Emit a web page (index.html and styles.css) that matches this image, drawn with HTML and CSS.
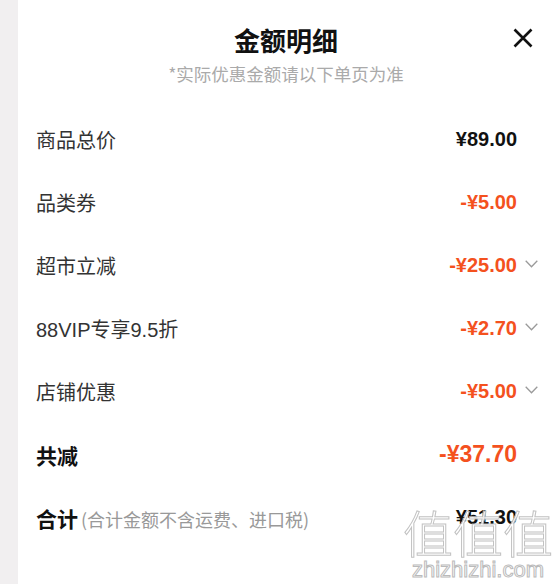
FILE: index.html
```html
<html>
<head>
  <meta charset="utf-8">
  <link rel="stylesheet" href="styles.css">
</head>
<body>
  <div id="app">
    <div class="side"></div>
    <div class="panel">
      <div class="header">
        <div class="title">金额明细</div>
        <div class="subtitle">*实际优惠金额请以下单页为准</div>
        <button class="close" aria-label="关闭">
          <svg width="20" height="20" viewBox="0 0 20 20"><path d="M1.5 1.5 L18.5 18.5 M18.5 1.5 L1.5 18.5" stroke="#111" stroke-width="2.6" fill="none"/></svg>
        </button>
      </div>
      <div class="rows">
        <div class="row">
          <span class="label">商品总价</span>
          <span class="amount">¥89.00</span>
          <span class="more"></span>
        </div>
        <div class="row">
          <span class="label">品类券</span>
          <span class="amount off">-¥5.00</span>
          <span class="more"></span>
        </div>
        <div class="row">
          <span class="label">超市立减</span>
          <span class="amount off">-¥25.00</span>
          <span class="more"><svg width="13" height="8" viewBox="0 0 13 8"><path d="M0.7 0.7 L6.5 6.7 L12.3 0.7" stroke="#9a9a9a" stroke-width="1.3" fill="none"/></svg></span>
        </div>
        <div class="row">
          <span class="label">88VIP专享9.5折</span>
          <span class="amount off">-¥2.70</span>
          <span class="more"><svg width="13" height="8" viewBox="0 0 13 8"><path d="M0.7 0.7 L6.5 6.7 L12.3 0.7" stroke="#9a9a9a" stroke-width="1.3" fill="none"/></svg></span>
        </div>
        <div class="row">
          <span class="label">店铺优惠</span>
          <span class="amount off">-¥5.00</span>
          <span class="more"><svg width="13" height="8" viewBox="0 0 13 8"><path d="M0.7 0.7 L6.5 6.7 L12.3 0.7" stroke="#9a9a9a" stroke-width="1.3" fill="none"/></svg></span>
        </div>
        <div class="row sum">
          <span class="label strong">共减</span>
          <span class="amount off big">-¥37.70</span>
          <span class="more"></span>
        </div>
        <div class="row sum">
          <span class="label strong">合计<small class="note">(合计金额不含运费、进口税)</small></span>
          <span class="amount">¥51.30</span>
          <span class="more"></span>
        </div>
      </div>
      <div class="watermark">
        <div class="wm-mark">值值值</div>
        <div class="wm-site">zhizhizhi.com</div>
      </div>
    </div>
  </div>
</body>
</html>
```

FILE: styles.css
```css
*, *:before, *:after { box-sizing: border-box; }
html, body { height: 100%; }
body {
  margin: 0;
  padding: 0;
  font-family: "Liberation Sans", "Noto Sans CJK SC", sans-serif;
  color: #333;
  background-color: #fff;
}
#app { display: flex; height: 100%; }
.side { flex: 0 0 18px; background-color: #f1eff0; }
.panel {
  flex: 1;
  position: relative;
  background-color: #fff;
  overflow: hidden;
}

/* header */
.header {
  position: relative;
  padding: 24px 0 24px;
  text-align: center;
}
.title {
  font-family: "Noto Sans CJK SC", sans-serif;
  font-size: 26px;
  line-height: 32px;
  font-weight: 700;
  color: #111;
}
.subtitle {
  margin-top: 8px;
  font-family: "Noto Sans CJK SC", sans-serif;
  font-size: 17.5px;
  line-height: 20px;
  color: #aaa;
}
.close {
  position: absolute;
  top: 28px;
  right: 21px;
  width: 20px;
  height: 20px;
  padding: 0;
  border: 0;
  background: none;
}
.close svg { display: block; }

/* rows */
.rows { padding: 0 16px 0 18px; }
.row {
  display: flex;
  align-items: center;
  height: 63px;
}
.label {
  flex: 1;
  font-size: 20px;
  color: #333;
}
.label.strong {
  font-family: "Noto Sans CJK SC", sans-serif;
  font-weight: 700;
  font-size: 21px;
  color: #111;
}
.note {
  margin-left: 3px;
  font-family: "Noto Sans CJK SC", sans-serif;
  font-weight: 400;
  font-size: 18px;
  color: #999;
}
.amount {
  font-size: 20px;
  font-weight: 700;
  color: #111;
}
.amount.off { color: #f4511e; }
.amount.big { font-size: 23px; }
.more {
  flex: 0 0 21px;
  display: flex;
  justify-content: flex-end;
  margin-top: -4px;
}
.more svg { display: block; }

/* watermark overlay */
.watermark {
  position: absolute;
  right: 1px;
  bottom: 2px;
  width: 150px;
  text-align: center;
  color: #fff;
  opacity: 0.92;
}
.wm-mark {
  font-family: "Noto Sans CJK SC", sans-serif;
  font-size: 50px;
  line-height: 54px;
  font-weight: 300;
  -webkit-text-stroke: 1px #bdbdbd;
}
.wm-site {
  font-family: "Liberation Sans", sans-serif;
  font-size: 22px;
  line-height: 24px;
  -webkit-text-stroke: 1px #b5b5b5;
}
```
